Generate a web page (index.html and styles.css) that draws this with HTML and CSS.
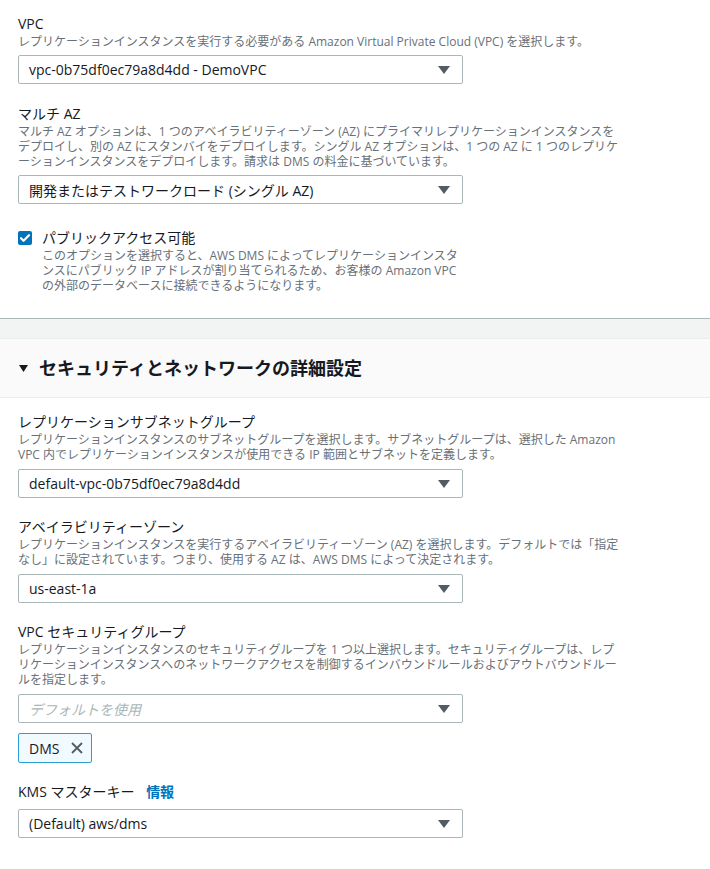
FILE: index.html
```html
<!DOCTYPE html>
<html lang="ja">
<head>
<meta charset="utf-8">
<title>レプリケーションインスタンス設定</title>
<link rel="stylesheet" href="styles.css">
</head>
<body>
<div class="page">
  <section class="panel">
    <div class="field">
      <div class="label">VPC</div>
      <div class="desc">レプリケーションインスタンスを実行する必要がある Amazon Virtual Private Cloud (VPC) を選択します。</div>
      <div class="select"><span>vpc-0b75df0ec79a8d4dd - DemoVPC</span><svg class="caret" viewBox="0 0 12 8"><path d="M0 0h12L6 8z"/></svg></div>
    </div>
    <div class="field">
      <div class="label">マルチ AZ</div>
      <div class="desc">マルチ AZ オプションは、1 つのアベイラビリティーゾーン (AZ) にプライマリレプリケーションインスタンスを<br>デプロイし、別の AZ にスタンバイをデプロイします。シングル AZ オプションは、1 つの AZ に 1 つのレプリケ<br>ーションインスタンスをデプロイします。請求は DMS の料金に基づいています。</div>
      <div class="select"><span>開発またはテストワークロード (シングル AZ)</span><svg class="caret" viewBox="0 0 12 8"><path d="M0 0h12L6 8z"/></svg></div>
    </div>
    <div class="check-field">
      <span class="checkbox"><svg viewBox="0 0 14 14"><path d="M3 7.2l2.6 2.6L11 4.2" fill="none" stroke="#fff" stroke-width="2.2" stroke-linecap="round" stroke-linejoin="round"/></svg></span>
      <div class="check-text">
        <div class="label">パブリックアクセス可能</div>
        <div class="desc">このオプションを選択すると、AWS DMS によってレプリケーションインスタ<br>ンスにパブリック IP アドレスが割り当てられるため、お客様の Amazon VPC<br>の外部のデータベースに接続できるようになります。</div>
      </div>
    </div>
  </section>
  <div class="band"></div>
  <section class="expander">
    <div class="exp-header">
      <svg class="exp-caret" viewBox="0 0 9 7"><path d="M0 0h9L4.5 7z"/></svg>
      <h2>セキュリティとネットワークの詳細設定</h2>
    </div>
    <div class="exp-body">
      <div class="field">
        <div class="label">レプリケーションサブネットグループ</div>
        <div class="desc">レプリケーションインスタンスのサブネットグループを選択します。サブネットグループは、選択した Amazon<br>VPC 内でレプリケーションインスタンスが使用できる IP 範囲とサブネットを定義します。</div>
        <div class="select"><span>default-vpc-0b75df0ec79a8d4dd</span><svg class="caret" viewBox="0 0 12 8"><path d="M0 0h12L6 8z"/></svg></div>
      </div>
      <div class="field">
        <div class="label">アベイラビリティーゾーン</div>
        <div class="desc">レプリケーションインスタンスを実行するアベイラビリティーゾーン (AZ) を選択します。デフォルトでは「指定<br>なし」に設定されています。つまり、使用する AZ は、AWS DMS によって決定されます。</div>
        <div class="select"><span>us-east-1a</span><svg class="caret" viewBox="0 0 12 8"><path d="M0 0h12L6 8z"/></svg></div>
      </div>
      <div class="field">
        <div class="label">VPC セキュリティグループ</div>
        <div class="desc">レプリケーションインスタンスのセキュリティグループを 1 つ以上選択します。セキュリティグループは、レプ<br>リケーションインスタンスへのネットワークアクセスを制御するインバウンドルールおよびアウトバウンドルー<br>ルを指定します。</div>
        <div class="select"><span class="placeholder">デフォルトを使用</span><svg class="caret" viewBox="0 0 12 8"><path d="M0 0h12L6 8z"/></svg></div>
        <div class="token"><span>DMS</span><svg class="token-x" viewBox="0 0 14 14"><path d="M2 2l10 10M12 2L2 12" fill="none" stroke="#545b64" stroke-width="1.8"/></svg></div>
      </div>
      <div class="field">
        <div class="label">KMS マスターキー <a class="info" href="#">情報</a></div>
        <div class="select"><span>(Default) aws/dms</span><svg class="caret" viewBox="0 0 12 8"><path d="M0 0h12L6 8z"/></svg></div>
      </div>
    </div>
  </section>
</div>
</body>
</html>
```

FILE: styles.css
```css
html, body {
  margin: 0;
  padding: 0;
  background: #ffffff;
}

body {
  font-family: "Open Sans", "Noto Sans CJK JP", sans-serif;
  color: #16191f;
}

.page {
  width: 710px;
}

.panel {
  padding: 14px 18px 25px;
  display: flex;
  flex-direction: column;
  gap: 20px;
  border-bottom: 1px solid #aab7b8;
}

.field {
  display: flex;
  flex-direction: column;
}

.label {
  font-size: 14px;
  line-height: 20px;
  color: #16191f;
}

.desc {
  font-size: 12px;
  line-height: 15px;
  color: #687078;
  white-space: nowrap;
}

.select {
  margin-top: 6px;
  width: 445px;
  height: 29px;
  box-sizing: border-box;
  border: 1px solid #aab7b8;
  border-radius: 2px;
  background: #fff;
  display: flex;
  align-items: center;
  justify-content: space-between;
  padding: 0 12px 0 10px;
  font-size: 14px;
  color: #16191f;
}

.caret {
  width: 12px;
  height: 8px;
  fill: #545b64;
}

.placeholder {
  color: #aab7b8;
  font-style: italic;
}

.check-field {
  margin-top: 4px;
  display: flex;
  gap: 10px;
  align-items: flex-start;
}

.checkbox {
  margin-top: 3px;
  width: 14px;
  height: 14px;
  border-radius: 2px;
  background: #0073bb;
  display: flex;
  flex-shrink: 0;
}

.checkbox svg {
  width: 14px;
  height: 14px;
}

.band {
  height: 19px;
  background: #f2f3f3;
  border-bottom: 1px solid #eaeded;
}

.exp-header {
  height: 58px;
  background: #fafafa;
  border-bottom: 1px solid #eaeded;
  display: flex;
  align-items: center;
  padding-left: 19px;
  gap: 11px;
}

.exp-caret {
  width: 9px;
  height: 7px;
  fill: #16191f;
}

.exp-header h2 {
  margin: 0;
  font-size: 18px;
  line-height: 24px;
  font-weight: 700;
  color: #16191f;
}

.exp-body {
  padding: 14px 18px 30px;
  display: flex;
  flex-direction: column;
  gap: 19px;
}

.exp-body .select {
  margin-top: 7px;
}

.token {
  margin-top: 10px;
  align-self: flex-start;
  height: 30px;
  box-sizing: border-box;
  display: flex;
  align-items: center;
  gap: 11px;
  padding: 0 7px 0 10px;
  background: #f1faff;
  border: 1px solid #2a9fd6;
  border-radius: 2px;
  font-size: 14px;
}

.token-x {
  width: 14px;
  height: 14px;
}

.info {
  margin-left: 8px;
  color: #0073bb;
  font-weight: 700;
  text-decoration: none;
}
```
